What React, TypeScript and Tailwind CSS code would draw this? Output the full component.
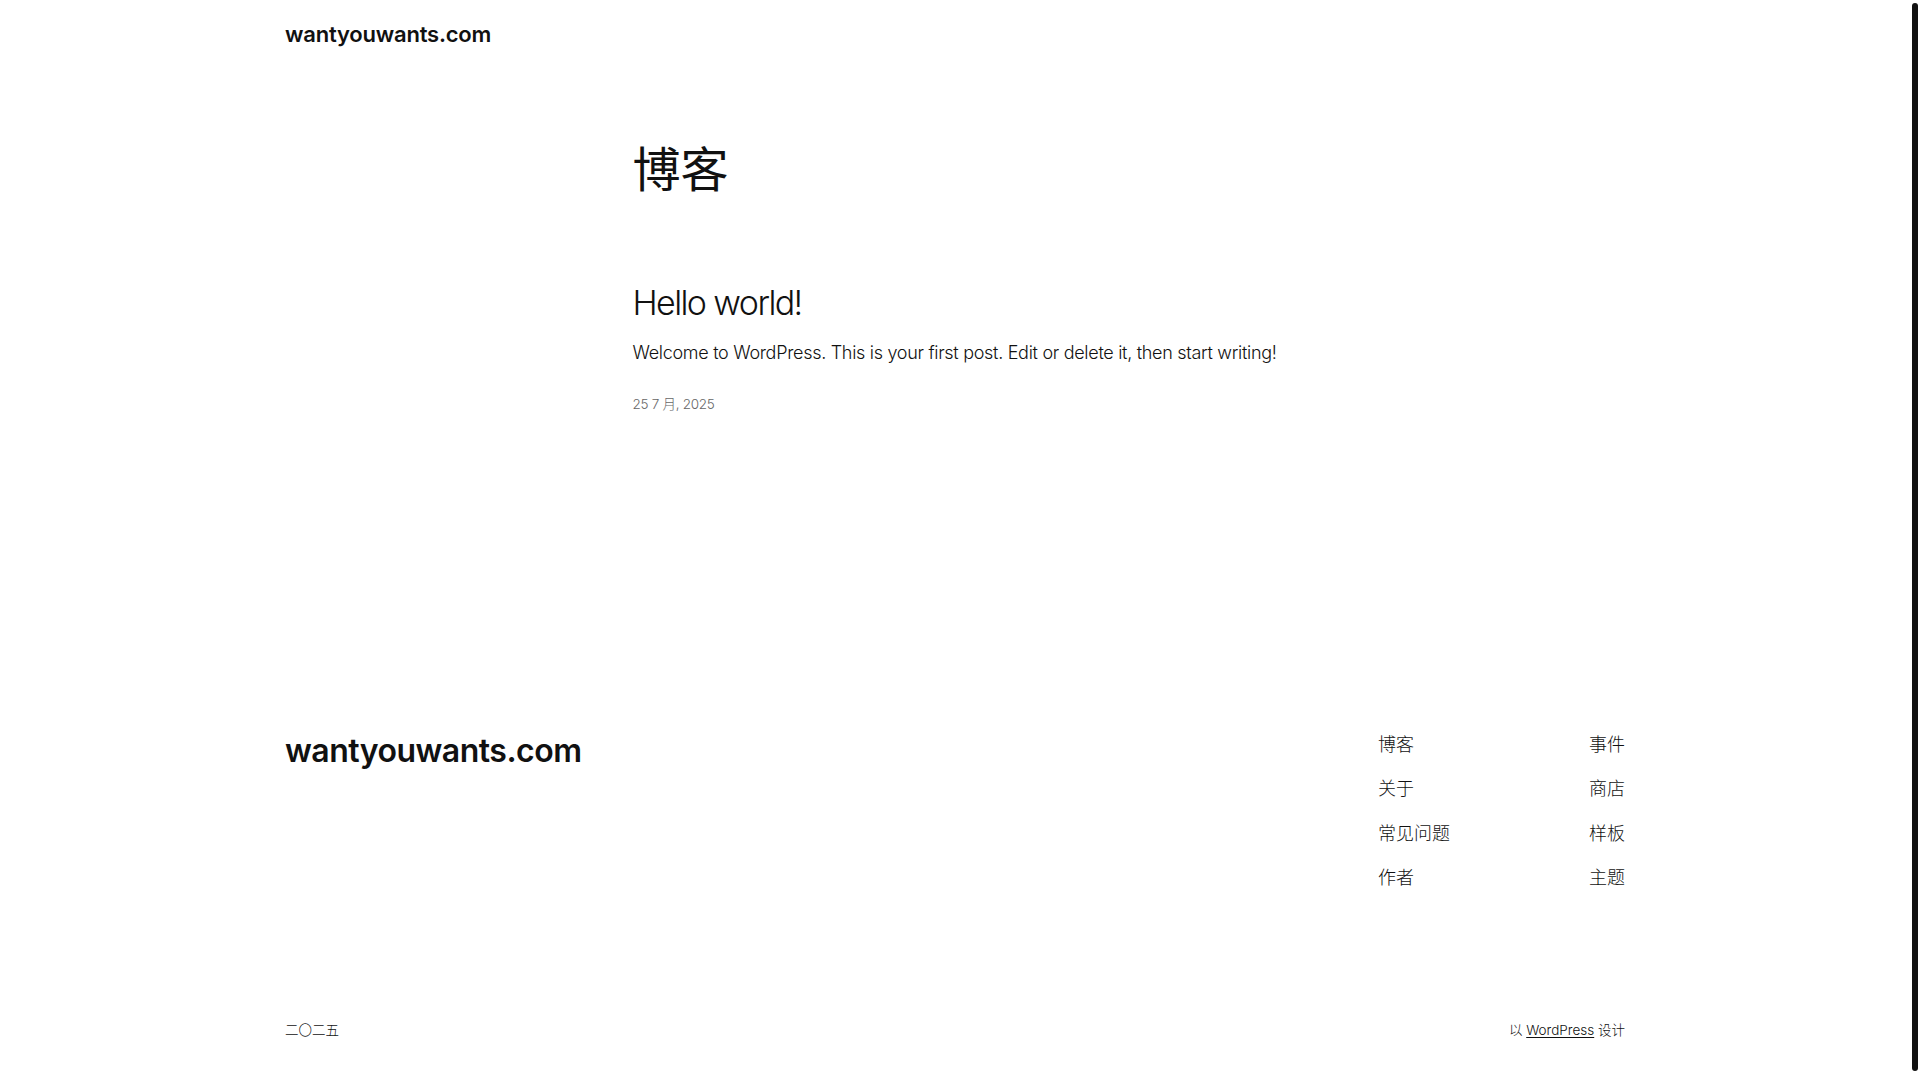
import React from "react";

const FONT = { fontFamily: "Inter, 'Noto Sans CJK SC', sans-serif" };

const NAV_LEFT = ["博客", "关于", "常见问题", "作者"];
const NAV_RIGHT = ["事件", "商店", "样板", "主题"];

export default function App() {
  return (
    <div className="flex h-[1080px] w-full overflow-hidden bg-white text-[#111111]" style={FONT}>
      <div className="flex w-[1910px] shrink-0 flex-col">
        {/* header */}
        <header className="flex h-[70px] items-center">
          <div className="mx-auto w-[1340px]">
            <a className="text-[22px] font-semibold leading-none tracking-[-0.2px]">wantyouwants.com</a>
          </div>
        </header>

        {/* main */}
        <main className="mx-auto w-[645px]">
          <h1 className="mt-[69px] text-[48px] font-normal leading-[62px]">博客</h1>
          <h2 className="mt-[79px] text-[34px] font-light leading-[46px] tracking-[-1.6px]">Hello world!</h2>
          <p className="mt-[12px] whitespace-nowrap text-[18px] font-light leading-[30px] tracking-[-0.3px]">
            Welcome to WordPress. This is your first post. Edit or delete it, then start writing!
          </p>
          <div className="mt-[26px] text-[13.5px] font-light leading-[20px] tracking-[-0.3px] text-[#666666]">25 7 月, 2025</div>
        </main>

        {/* footer */}
        <footer className="mx-auto mt-[317px] w-[1340px]">
          <div className="flex items-start justify-between">
            <div className="mt-[2px] text-[32px] font-semibold leading-[36px] tracking-[-0.5px]">wantyouwants.com</div>
            <div className="flex gap-[139px] text-[18px] font-light leading-[28px]">
              <ul className="flex flex-col gap-[16.3px]">
                {NAV_LEFT.map(n => <li key={n}>{n}</li>)}
              </ul>
              <ul className="flex flex-col items-end gap-[16.3px]">
                {NAV_RIGHT.map(n => <li key={n}>{n}</li>)}
              </ul>
            </div>
          </div>
          <div className="mt-[127px] flex items-center justify-between text-[13.5px] font-light leading-[22px]">
            <span>二〇二五</span>
            <span>以 <a className="underline underline-offset-2">WordPress</a> 设计</span>
          </div>
        </footer>
      </div>

      {/* scrollbar track */}
      <div className="flex w-[10px] shrink-0 justify-center pt-[3px] pb-[9px]">
        <div className="w-[6px] rounded-full bg-[#111111]" />
      </div>
    </div>
  );
}
